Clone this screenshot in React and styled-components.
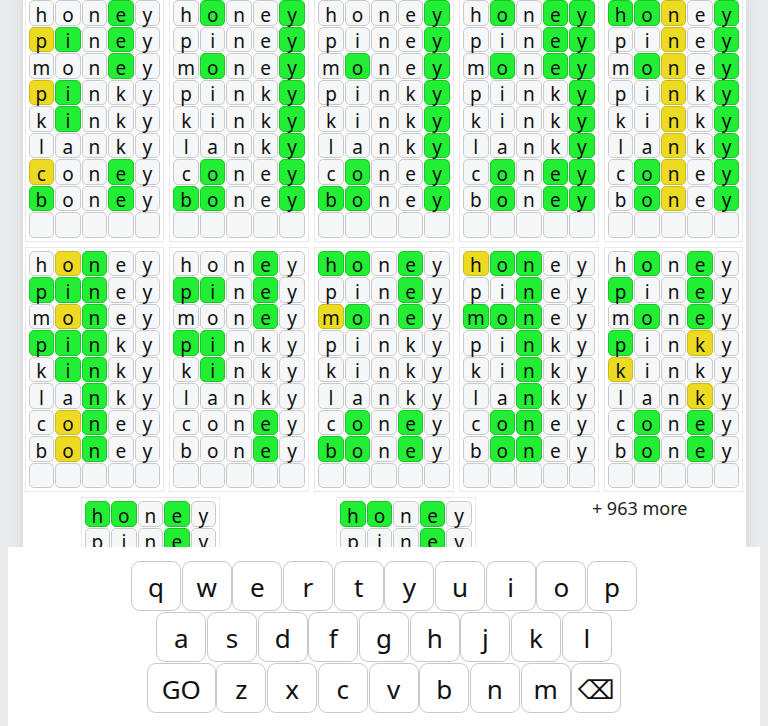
import styled, { createGlobalStyle } from 'styled-components';

const GlobalStyle = createGlobalStyle`
  html, body {
    margin: 0;
    padding: 0;
    overflow: hidden;
    background: #e9eaec;
    font-family: "Segoe UI", "Noto Sans", "DejaVu Sans", sans-serif;
    color: #111;
  }
`

const WORDS = ['honey', 'piney', 'money', 'pinky', 'kinky', 'lanky', 'coney', 'boney']

// one string per row: . = plain, g = green, y = yellow
const BOARDS = [
  ['...g.', 'yg.g.', '...g.', 'yg...', '.g...', '.....', 'y..g.', 'g..g.'],
  ['.g..g', '....g', '.g..g', '....g', '....g', '....g', '.g..g', 'gg..g'],
  ['....g', '....g', '.g..g', '....g', '....g', '....g', '.g..g', 'gg..g'],
  ['.g.gg', '...gg', '.g.gg', '....g', '....g', '....g', '.g.gg', '.g.gg'],
  ['ggy.g', '..y.g', '.gy.g', '..y.g', '..y.g', '..y.g', '.gy.g', '.gy.g'],
  ['.yg..', 'ggg..', '.yg..', 'ggg..', '.gg..', '..g..', '.yg..', '.yg..'],
  ['...g.', 'gg.g.', '...g.', 'gg...', '.g...', '.....', '...g.', '...g.'],
  ['gg.g.', '...g.', 'yg.g.', '.....', '.....', '.....', '.g.g.', 'gg.g.'],
  ['ygg..', '..g..', 'ggg..', '..g..', '..g..', '..g..', '.gg..', '.gg..'],
  ['.g.g.', 'g..g.', '.g.g.', 'g..y.', 'y....', '...y.', '.g.g.', '.g.g.'],
]

const EXTRA = [
  ['gg.g.', '...g.', 'gg.g.', '.....', '.....', '.....', '.g.g.', 'gg.g.'],
  ['gg.g.', '...g.', '.g.g.', '.....', '.....', '.....', '.g.g.', '.g.g.'],
]

const KEYS = [
  ['q', 'w', 'e', 'r', 't', 'y', 'u', 'i', 'o', 'p'],
  ['a', 's', 'd', 'f', 'g', 'h', 'j', 'k', 'l'],
  ['GO', 'z', 'x', 'c', 'v', 'b', 'n', 'm', '⌫'],
]

const Page = styled.main`
  width: 723px;
  min-height: 100vh;
  margin: 0 auto;
  background: #fff;
  box-shadow: 0 0 12px rgba(0, 0, 0, 0.09);
`

const BoardGrid = styled.div`
  display: grid;
  grid-template-columns: repeat(5, 139.5px);
  justify-content: center;
  gap: 5px 5.3px;
  margin-top: -4px;
`

const MoreRow = styled.div`
  display: flex;
  justify-content: space-around;
  align-items: flex-start;
  margin-top: 5px;
`

const Board = styled.div`
  display: grid;
  grid-template-columns: repeat(5, 25.5px);
  grid-auto-rows: 25.5px;
  gap: 1px;
  padding: 3px;
  border: 1px solid #e9e9e9;
`

const TONES = {
  '.': { bg: '#f6f7f9', border: '#c9c9c9' },
  g: { bg: '#22ee33', border: '#1cc42c' },
  y: { bg: '#ecdb22', border: '#c9b91c' },
}

const Cell = styled.div`
  box-sizing: border-box;
  display: flex;
  justify-content: center;
  align-items: center;
  padding-top: 5px;
  border: 1px solid ${p => TONES[p.$tone].border};
  border-radius: 5px;
  background: ${p => TONES[p.$tone].bg};
  font-size: 19px;
  line-height: 1;
`

const More = styled.div`
  font-size: 18px;
  line-height: 22px;
  color: #222;
`

const Keyboard = styled.div`
  position: fixed;
  left: 8px;
  right: 8px;
  bottom: 0;
  height: 179px;
  box-sizing: border-box;
  padding-top: 14px;
  background: #fff;
  display: flex;
  flex-direction: column;
  align-items: center;
  gap: 1px;
`

const KeyRow = styled.div`
  display: flex;
  gap: 0.7px;
`

const Key = styled.button`
  box-sizing: border-box;
  width: ${p => (p.$wide ? '69px' : '50px')};
  height: 50px;
  padding: 2px 0 0;
  display: flex;
  justify-content: center;
  align-items: center;
  background: #fff;
  border: 1px solid #c8c8c8;
  border-radius: 9px;
  font-family: inherit;
  font-size: 26px;
  line-height: 30px;
  color: #111;
`

function WordBoard({ marks }) {
  return (
    <Board>
      {WORDS.map((word, r) =>
        word.split('').map((ch, c) => (
          <Cell key={`${r}-${c}`} $tone={marks[r][c]}>{ch}</Cell>
        ))
      )}
      {[0, 1, 2, 3, 4].map(c => <Cell key={`e-${c}`} $tone="." />)}
    </Board>
  )
}

export default function App() {
  return (
    <>
      <GlobalStyle />
      <Page>
        <BoardGrid>
          {BOARDS.map((marks, i) => <WordBoard key={i} marks={marks} />)}
        </BoardGrid>
        <MoreRow>
          <WordBoard marks={EXTRA[0]} />
          <WordBoard marks={EXTRA[1]} />
          <More>+ 963 more</More>
        </MoreRow>
      </Page>

      <Keyboard>
        {KEYS.map((row, i) => (
          <KeyRow key={i}>
            {row.map(k => <Key key={k} $wide={k === 'GO'}>{k}</Key>)}
          </KeyRow>
        ))}
      </Keyboard>
    </>
  )
}
